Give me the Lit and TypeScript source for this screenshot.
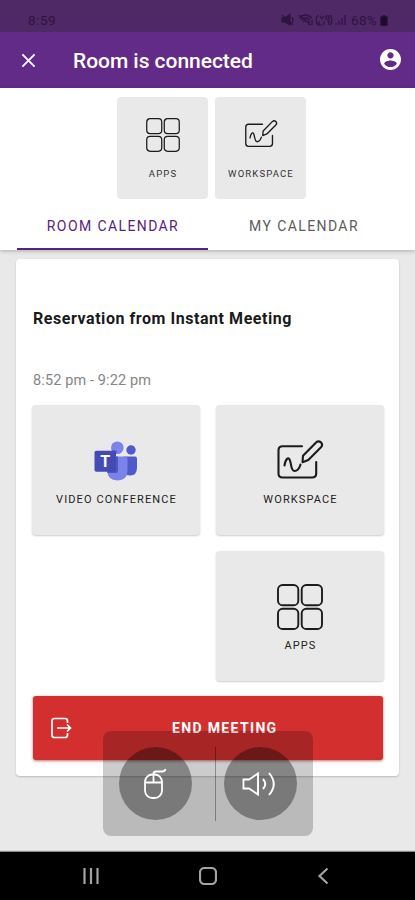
import { LitElement, html, css, svg } from "lit";
import { customElement } from "lit/decorators.js";

const appsIcon = (cls: string) => html`<svg class=${cls} viewBox="0 0 46 46" fill="none" stroke="#1c1c1c">
  ${[1, 24.7].map((y) => [1, 24.7].map((x) => svg`<rect x=${x} y=${y} width="20.3" height="20.3" rx="4.6" />`))}
</svg>`;

const boardIcon = (cls: string) => html`<svg class=${cls} viewBox="0 0 48 42" fill="none" stroke="#1c1c1c" stroke-linecap="round" stroke-linejoin="round">
  <path d="M26 7.2H6.5Q2.5 7.2 2.5 11.200V34.500Q2.500 38.500 6.500 38.500H36Q40.200 38.500 40.200 34.500V23" />
  <path d="M8.500 26.500C9.500 20 12.500 17 14 21.500C15.500 26 15 32 18.500 32C22 32 23.500 29 24.500 25.500" />
  <path d="M26.500 23.200L27 16.700L40.300 3.200Q42.500 1.300 45 3.400Q47.200 6 45 8.200L32.300 20.900Z" />
</svg>`;

const teamsIcon = html`<svg class="teams" viewBox="0 0 44 42">
  <circle cx="37" cy="10" r="4.700" fill="#5059c9" />
  <path d="M30 16.500H41Q43 16.500 43 18.500V27.500Q43 35.500 36 35.500Q31.500 35.500 30 33Z" fill="#5059c9" />
  <circle cx="23.300" cy="7.700" r="6.300" fill="#7b83eb" />
  <path d="M13 16.500H31.500Q33.500 16.500 33.500 18.500V30Q33.500 40.500 23.500 40.500Q13.500 40.500 13 30Z" fill="#7b83eb" />
  <path d="M13 16.500H24V31Q24 33 22 33H13.300Z" fill="#5158bd" />
  <path d="M17.500 10.500H22.500V13.800Q19 13.500 17.500 10.500Z" fill="#5158bd" />
  <rect x="0.500" y="10.800" width="21.500" height="21" rx="1.800" fill="#444bb5" />
  <text class="t" x="11.200" y="27.200" text-anchor="middle">T</text>
</svg>`;

@customElement("app-root")
export class AppRoot extends LitElement {
  static styles = css`
    :host { display: flex; flex-direction: column; position: relative; width: 415px; height: 900px; overflow: hidden; background: #e9e9e9; font-family: Roboto, sans-serif; color: #333; }
    svg { display: block; flex: none; }
    span, h1, h2, p { white-space: nowrap; margin: 0; }
    .status { height: 32px; flex: none; box-sizing: border-box; background: #4f2866; color: #2f1340; display: flex; align-items: center; padding: 8px 27px 0 28px; font-size: 13.500px; line-height: 24px; }
    .status .clock { flex: 1; letter-spacing: 0.550px; }
    .pct { letter-spacing: 0.300px; }
    .signals { width: 66px; height: 14px; margin-right: 4px; }
    .batt { width: 8px; height: 11px; margin-left: 3px; }
    .bar { height: 56px; flex: none; background: #622b87; color: #fff; display: flex; align-items: center; padding: 0 14px 0 21px; box-sizing: border-box; }
    .close { width: 15px; height: 15px; }
    h1 { flex: 1; margin-left: 37px; font-size: 21px; font-weight: 500; letter-spacing: -0.040px; line-height: 56px; padding-top: 1px; box-sizing: border-box; height: 56px; }
    .user { width: 21px; height: 21px; margin-bottom: 1px; }
    .top { height: 162px; flex: none; background: #fff; box-shadow: 0 1px 4px rgba(0,0,0,.27); }
    .quick { display: flex; justify-content: center; gap: 7px; padding: 9px 0 0; margin-right: -8px; }
    .tile { background: #e9e9e9; border-radius: 4px; display: flex; flex-direction: column; align-items: center; box-sizing: border-box; }
    .quick .tile { width: 91px; height: 102px; }
    .small { width: 34px; height: 34px; margin-top: 21px; stroke-width: 1.700; }
    .smallboard { width: 34px; height: 30px; margin: 22px 0 3px 1px; stroke-width: 1.900; }
    .quick .lab { margin-top: 16px; font-size: 9.500px; line-height: 12px; letter-spacing: 1.150px; margin-right: -1px; color: #333; }
    .tabs { display: flex; margin: 0 16px 0 17px; padding-top: 3px; }
    .tab { width: 191px; height: 48px; box-sizing: border-box; text-align: center; font-size: 14px; line-height: 49px; letter-spacing: 1.400px; padding-left: 1px; color: #5c5c5c; }
    .tab.on { color: #55257d; border-bottom: 2px solid #55257d; }
    .card { width: 383px; height: 517px; flex: none; margin: 9px 0 0 16px; padding: 50px 16px 0; box-sizing: border-box; background: #fff; border-radius: 4px; box-shadow: 0 1px 2px rgba(0,0,0,.2); }
    h2 { margin-left: 1px; font-size: 16px; line-height: 20px; font-weight: 700; color: #1a1a1a; letter-spacing: 0.550px; }
    .time { margin: 42px 0 0 1px; font-size: 14.500px; line-height: 20px; letter-spacing: 0.120px; color: #858585; }
    .grid { display: grid; grid-template-columns: 168px 168px; gap: 16px; margin-top: 14px; }
    .grid .tile { height: 130px; box-shadow: 0 1px 2px rgba(0,0,0,.2); }
    .grid .tile:last-child { grid-column: 2; }
    .big { width: 46px; height: 46px; margin-top: 33px; stroke-width: 1.900; }
    .bigboard { width: 48px; height: 42px; margin: 34px 0 3px; stroke-width: 2.100; }
    .teams { width: 44px; height: 42px; margin: 35px 0 2px; }
    .t { font: 700 16px Roboto, sans-serif; fill: #fff; }
    .grid .lab { margin-top: 9px; font-size: 11px; line-height: 14px; letter-spacing: 1.120px; margin-right: -1px; color: #222; }
    .end { width: 350px; height: 64px; margin: 15px 0 0 1px; background: #d32f2f; border-radius: 3px; box-shadow: 0 1px 3px rgba(120,0,0,.55); display: flex; align-items: center; color: #fff; box-sizing: border-box; padding-left: 18px; }
    .exit { width: 21px; height: 22px; }
    .end .word { margin-left: 100px; font-size: 14px; font-weight: 700; letter-spacing: 1.350px; }
    .float { position: absolute; left: 103px; top: 731px; width: 210px; height: 105px; border-radius: 8px; background: rgba(0,0,0,.2); display: flex; align-items: center; padding-left: 16px; box-sizing: border-box; }
    .round { width: 73px; height: 73px; border-radius: 50%; background: rgba(0,0,0,.35); display: flex; align-items: center; justify-content: center; flex: none; }
    .line { width: 1px; height: 74px; flex: none; background: rgba(0,0,0,.33); margin: 0 8px 0 23px; }
    .mouse { width: 24px; height: 32px; margin-right: 2px; }
    .sound { width: 36px; height: 28px; margin-right: 3px; }
    .nav { margin-top: auto; height: 48px; flex: none; background: #000; box-shadow: 0 -1px 1px #888; display: flex; align-items: center; justify-content: space-between; padding: 0 85px 1px 82px; box-sizing: border-box; }
    .nav svg { width: 18px; height: 18px; fill: none; stroke: #a3a3a3; stroke-width: 2.200; }
    .nav .back { width: 14px; }
  `;

  render() {
    return html`
      <div class="status">
        <span class="clock">8:59</span>
        <svg class="signals" viewBox="0 0 66 14" fill="none" stroke="#2f1340" stroke-width="1.200">
          <path d="M1 5H4L9 1.500V12L4 9H1Z" fill="#2f1340" />
          <path d="M1 2L12 12M11 4Q13 7 11 10" />
          <path d="M18 5Q24 -1 31 5M20 7Q24 3 29 7M22 9Q24 7 27 9M28 7V12M31 7V12M18 2L30 12" />
          <path d="M37 2Q33 7 37 12M49 2Q53 7 49 12M39 3L41 6L43 3M45 3H48V6H45ZM38 8V12H41M43 8V12M46 8H49M47.500 8V12" />
          <path d="M55 10V12M58 8V12M61 5V12M64 2V12" />
        </svg>
        <span class="pct">68%</span>
        <svg class="batt" viewBox="0 0 9 12" fill="#1f0b2b"><path d="M3 0H6V1.500H8.500V12H0.500V1.500H3Z" /></svg>
      </div>
      <div class="bar">
        <svg class="close" viewBox="0 0 16 16" stroke="#fff" stroke-width="2"><path d="M1.500 1.500L14.500 14.500M14.500 1.500L1.500 14.500" /></svg>
        <h1>Room is connected</h1>
        <svg class="user" viewBox="2 2 20 20" fill="#fff"><path d="M12 2C6.480 2 2 6.480 2 12s4.480 10 10 10 10-4.480 10-10S17.520 2 12 2zm0 3c1.660 0 3 1.340 3 3s-1.340 3-3 3-3-1.340-3-3 1.340-3 3-3zm0 14.200c-2.500 0-4.710-1.280-6-3.220.030-1.990 4-3.080 6-3.080 1.990 0 5.970 1.090 6 3.080-1.290 1.940-3.500 3.220-6 3.220z" /></svg>
      </div>
      <div class="top">
        <div class="quick">
          <div class="tile">${appsIcon("small")}<span class="lab">APPS</span></div>
          <div class="tile">${boardIcon("smallboard")}<span class="lab">WORKSPACE</span></div>
        </div>
        <div class="tabs">
          <span class="tab on">ROOM CALENDAR</span>
          <span class="tab">MY CALENDAR</span>
        </div>
      </div>
      <div class="card">
        <h2>Reservation from Instant Meeting</h2>
        <p class="time">8:52 pm - 9:22 pm</p>
        <div class="grid">
          <div class="tile">${teamsIcon}<span class="lab">VIDEO CONFERENCE</span></div>
          <div class="tile">${boardIcon("bigboard")}<span class="lab">WORKSPACE</span></div>
          <div class="tile">${appsIcon("big")}<span class="lab">APPS</span></div>
        </div>
        <div class="end">
          <svg class="exit" viewBox="0 0 21 22" fill="none" stroke="#fff" stroke-width="1.700"><path d="M16.500 6V4Q16.500 1.500 14 1.500H3.500Q1 1.500 1 4V18Q1 20.500 3.500 20.500H14Q16.500 20.500 16.500 18V16M6 11H19.500M16 7.500L19.500 11L16 14.500" /></svg>
          <span class="word">END MEETING</span>
        </div>
      </div>
      <div class="nav">
        <svg viewBox="0 0 18 18"><path d="M2.500 1V17M9 1V17M15.500 1V17" /></svg>
        <svg viewBox="0 0 18 18"><rect x="1" y="1" width="16" height="16" rx="4.500" /></svg>
        <svg class="back" viewBox="0 0 14 18"><path d="M11.500 1.500L3.500 9L11.500 16.500" /></svg>
      </div>
      <div class="float">
        <div class="round">
          <svg class="mouse" viewBox="0 0 24 32" fill="none" stroke="#fff" stroke-width="1.800"><rect x="2" y="6.500" width="17" height="23.500" rx="7.500" /><path d="M2 14.500H19M10.500 14.500V6Q10.500 3.500 13 3.500H19Q22 3.500 22.500 1" /></svg>
        </div>
        <div class="line"></div>
        <div class="round">
          <svg class="sound" viewBox="0 0 36 28" fill="none" stroke="#fff" stroke-width="1.900"><path d="M2.500 9.500H8L17 3.500V24.500L8 18.500H2.500ZM22 9Q26.500 14 22 19M28 3Q37.500 14 28 25" /></svg>
        </div>
      </div>
    `;
  }
}
